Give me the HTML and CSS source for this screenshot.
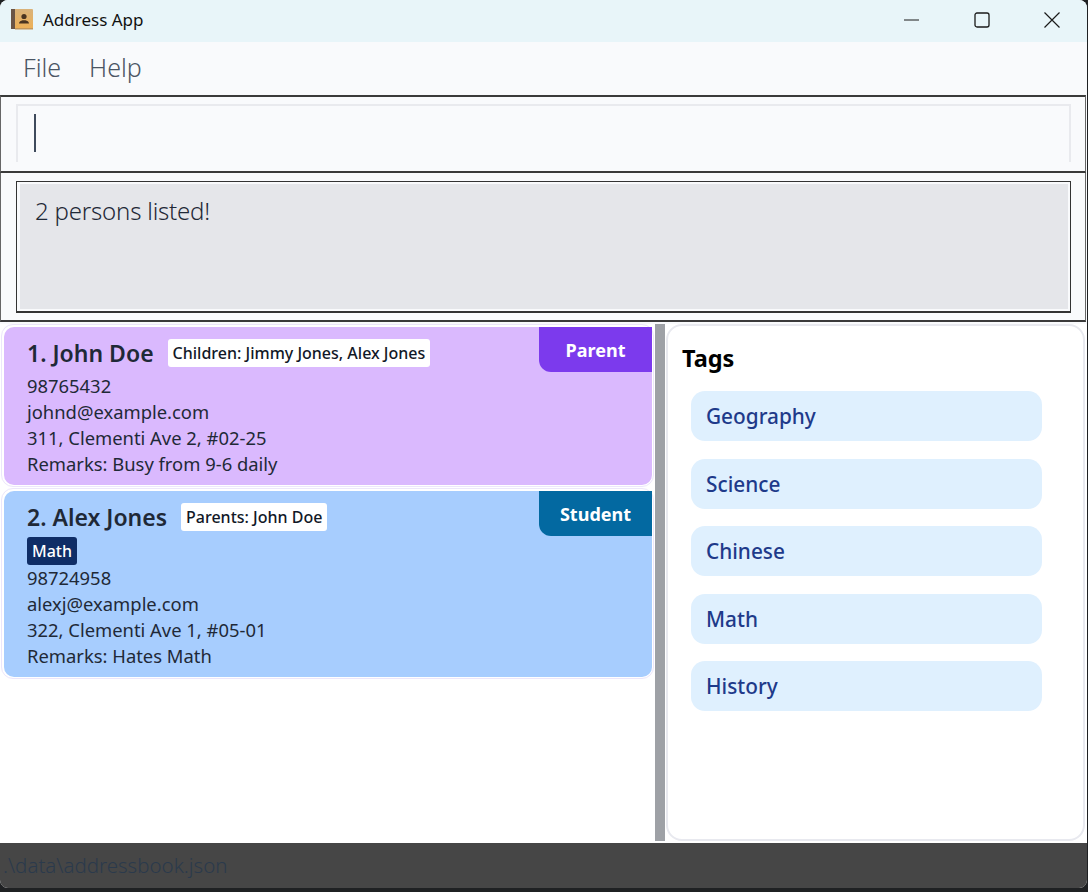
FILE: index.html
```html
<!DOCTYPE html>
<html lang="en">
<head>
    <meta charset="UTF-8">
    <meta name="viewport" content="width=device-width, initial-scale=1.0">
    <title>Address App</title>
    <link rel="stylesheet" href="styles.css">
</head>
<body>

<div class="window">
    <header class="titlebar">
        <svg class="app-icon" width="22" height="21" viewBox="0 0 22 21">
            <defs>
                <linearGradient id="cover" x1="0" y1="0" x2="0" y2="1">
                    <stop offset="0" stop-color="#d9b27a"/>
                    <stop offset="1" stop-color="#eeb055"/>
                </linearGradient>
            </defs>
            <rect x="0" y="0" width="22" height="20" rx="1" fill="url(#cover)"/>
            <rect x="0" y="0" width="4" height="20" fill="#6b5546"/>
            <rect x="4" y="19" width="18" height="1.500" fill="#c3975c"/>
            <circle cx="13" cy="7.500" r="2.600" fill="#4a3420"/>
            <path d="M8 14.500c0-2 2-2.500 3.500-3.200h3c1.500.7 3.500 1.200 3.500 3.200z" fill="#4a3420"/>
        </svg>
        <span class="app-title">Address App</span>
        <div class="win-controls">
            <svg width="16" height="16" viewBox="0 0 16 16"><path d="M0 8h15" stroke="#1a1a1a" fill="none"/></svg>
            <svg width="16" height="16" viewBox="0 0 16 16"><rect x="1" y="1" width="14" height="14" rx="2" stroke="#1a1a1a" stroke-width="1.300" fill="none"/></svg>
            <svg width="16" height="16" viewBox="0 0 16 16"><path d="M.5.5l15 15M15.500.5l-15 15" stroke="#1a1a1a" stroke-width="1.200" fill="none"/></svg>
        </div>
    </header>

    <nav class="menubar">
        <a>File</a>
        <a>Help</a>
    </nav>

    <section class="command-box">
        <div class="command-field"><span class="caret"></span></div>
    </section>

    <section class="result-box">
        <div class="result-field">2 persons listed!</div>
    </section>

    <main class="content">
        <div class="person-list">
            <div class="person-cell">
                <article class="card card-parent">
                    <span class="role role-parent">Parent</span>
                    <div class="card-head">
                        <h2>1. John Doe</h2>
                        <span class="relation">Children: Jimmy Jones, Alex Jones</span>
                    </div>
                    <p>98765432</p>
                    <p>johnd@example.com</p>
                    <p>311, Clementi Ave 2, #02-25</p>
                    <p>Remarks: Busy from 9-6 daily</p>
                </article>
            </div>
            <div class="person-cell">
                <article class="card card-student">
                    <span class="role role-student">Student</span>
                    <div class="card-head">
                        <h2>2. Alex Jones</h2>
                        <span class="relation">Parents: John Doe</span>
                    </div>
                    <span class="subject">Math</span>
                    <p>98724958</p>
                    <p>alexj@example.com</p>
                    <p>322, Clementi Ave 1, #05-01</p>
                    <p>Remarks: Hates Math</p>
                </article>
            </div>
        </div>

        <div class="divider"></div>

        <aside class="tags-panel">
            <h3>Tags</h3>
            <div class="tag">Geography</div>
            <div class="tag">Science</div>
            <div class="tag">Chinese</div>
            <div class="tag">Math</div>
            <div class="tag">History</div>
        </aside>
    </main>

    <footer class="statusbar">.\data\addressbook.json</footer>
</div>

</body>
</html>
```

FILE: styles.css
```css
html, body {
    margin: 0;
    height: 100%;
    overflow: hidden;
}

body {
    background-color: #1f2123;
    font-family: "Noto Sans", "Open Sans", sans-serif;
    color: #1f2937;
}

.window {
    width: 1087px;
    height: 888px;
    display: flex;
    flex-direction: column;
    background-color: #f9fafc;
    border-radius: 8px;
    overflow: hidden;
}

.titlebar {
    height: 42px;
    flex: none;
    box-sizing: border-box;
    display: flex;
    align-items: center;
    padding: 0 0 3px 11px;
    background-color: #e8f5f9;
    color: #111;
}

.app-title {
    margin-left: 10px;
    font-size: 17px;
}

.win-controls {
    margin-left: auto;
    display: flex;
    gap: 54px;
    padding-right: 27px;
}

.menubar {
    height: 53px;
    flex: none;
    box-sizing: border-box;
    display: flex;
    align-items: center;
    gap: 28px;
    padding: 0 0 4px 23px;
    font-size: 25px;
    font-weight: 300;
    color: #4b5563;
}

.command-box {
    height: 78px;
    flex: none;
    box-sizing: border-box;
    margin-right: 1px;
    border: 1px solid #666;
    border-top: 2px solid #3a3a3a;
    border-bottom: 2px solid #3a3a3a;
    padding: 7px 14px 9px 15px;
}

.command-field {
    height: 100%;
    box-sizing: border-box;
    border: 2px solid #e9eaee;
    border-bottom: none;
    padding: 8px 16px;
}

.caret {
    display: block;
    width: 2px;
    height: 38px;
    background-color: #3f4a5c;
}

.result-box {
    height: 149px;
    flex: none;
    box-sizing: border-box;
    margin-right: 1px;
    border: 1px solid #666;
    border-top: none;
    border-bottom: 2px solid #3a3a3a;
    padding: 8px 14px 7px 15px;
}

.result-field {
    height: 100%;
    box-sizing: border-box;
    border: 1px solid #333;
    border-bottom-width: 2px;
    box-shadow: inset 3px 2px 0 #f9fafc, inset -2px -2px 0 #f9fafc;
    background-color: #e5e6ea;
    padding: 12px 18px;
    font-size: 24px;
    font-weight: 300;
    letter-spacing: -0.2px;
}

.content {
    flex: 1;
    min-height: 0;
    display: flex;
    margin-top: 2px;
    background-color: #fff;
}

.person-list {
    width: 655px;
    flex: none;
}

.person-cell {
    margin: 0 1px 1px;
    padding: 2px 1px 1px 2px;
    border: 1px solid #ece6fb;
    border-radius: 12px;
    width: 648px;
}

.card {
    position: relative;
    box-sizing: border-box;
    padding: 10px 23px 8px;
    border-radius: 10px;
}

.card-parent {
    height: 158px;
    background-color: #dab9fe;
}

.card-student {
    height: 186px;
    background-color: #a7cdfe;
}

.card p {
    margin: 0;
    font-size: 18.400px;
    line-height: 26px;
}

.card-head {
    display: flex;
    align-items: center;
    height: 32px;
    gap: 14px;
    margin-bottom: 4px;
}

.card-head h2 {
    margin: 0;
    font-size: 23px;
    font-weight: 600;
}

.relation {
    background-color: #fff;
    border-radius: 3px;
    padding: 0 5px;
    height: 28px;
    line-height: 28px;
    font-size: 16px;
    font-weight: 500;
    color: #111827;
}

.subject {
    display: inline-block;
    background-color: #0f2d66;
    border-radius: 3px;
    padding: 0 5px;
    height: 28px;
    line-height: 28px;
    font-size: 16px;
    font-weight: 500;
    color: #fff;
}

.role {
    position: absolute;
    top: 0;
    right: 0;
    width: 113px;
    height: 45px;
    line-height: 46px;
    text-align: center;
    border-bottom-left-radius: 12px;
    font-size: 18px;
    font-weight: 700;
    color: #fff;
}

.role-parent {
    background-color: #7c3aed;
}

.role-student {
    background-color: #0369a1;
}

.divider {
    width: 10px;
    flex: none;
    margin-bottom: 2px;
    background-color: #9ea1a6;
}

.tags-panel {
    flex: 1;
    margin: 0 2px 2px 1px;
    box-sizing: border-box;
    border: 2px solid #e8e9ef;
    border-radius: 16px;
    padding: 17px 14px;
}

.tags-panel h3 {
    margin: 0 0 17px;
    font-size: 23.500px;
    font-weight: 700;
    color: #000;
    line-height: 31px;
}

.tag {
    width: 351px;
    height: 50px;
    box-sizing: border-box;
    margin: 0 0 17.500px 9px;
    padding-left: 15px;
    line-height: 51px;
    border-radius: 14px;
    background-color: #dff0fe;
    font-size: 20.800px;
    font-weight: 500;
    color: #1e3a8a;
}

.statusbar {
    height: 45px;
    flex: none;
    box-sizing: border-box;
    padding-left: 3px;
    line-height: 45px;
    background-color: #464646;
    font-size: 20.500px;
    font-weight: 300;
    color: #2b3a4c;
}
```
